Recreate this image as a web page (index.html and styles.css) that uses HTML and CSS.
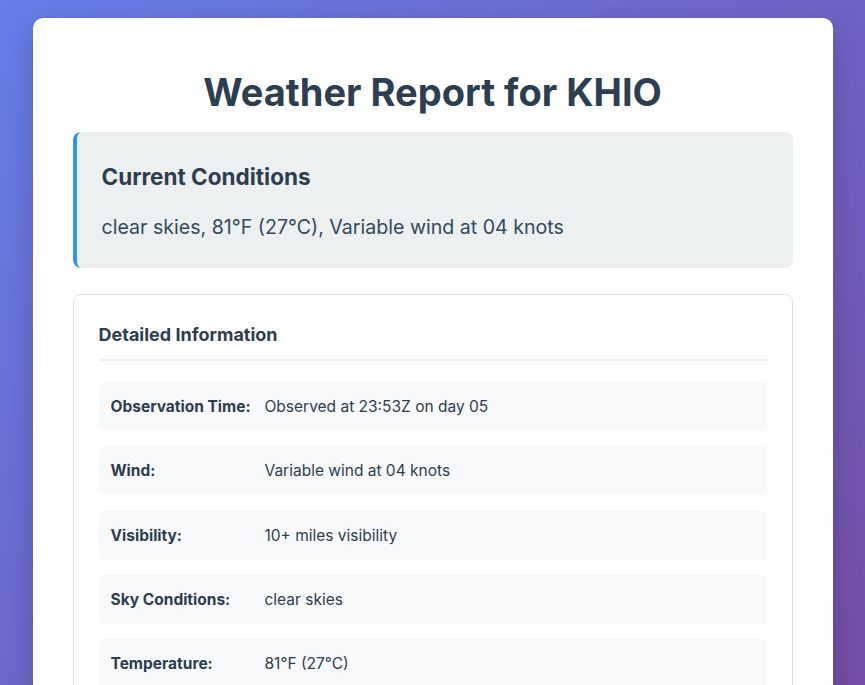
FILE: index.html
```html
<!DOCTYPE html>
<html lang="en">
<head>
<meta charset="utf-8">
<title>Weather Report for KHIO</title>
<link rel="stylesheet" href="styles.css">
</head>
<body>
<div class="container">
  <h1 class="title">Weather Report for KHIO</h1>
  <div class="current">
    <h2 class="current-title">Current Conditions</h2>
    <p class="current-text">clear skies, 81°F (27°C), Variable wind at 04 knots</p>
  </div>
  <div class="details">
    <h3 class="details-title">Detailed Information</h3>
    <div class="row"><span class="label">Observation Time:</span><span class="value">Observed at 23:53Z on day 05</span></div>
    <div class="row"><span class="label">Wind:</span><span class="value">Variable wind at 04 knots</span></div>
    <div class="row"><span class="label">Visibility:</span><span class="value">10+ miles visibility</span></div>
    <div class="row"><span class="label">Sky Conditions:</span><span class="value">clear skies</span></div>
    <div class="row"><span class="label">Temperature:</span><span class="value">81°F (27°C)</span></div>
  </div>
</div>
</body>
</html>
```
FILE: styles.css
```css
html, body {
  margin: 0;
  padding: 0;
}
body {
  font-family: Inter, "Noto Sans", sans-serif;
  background: linear-gradient(135deg, #667eea 0%, #764ba2 100%);
  min-height: 100vh;
  padding: 18px 0 20px;
  box-sizing: border-box;
  color: #2c3e50;
}
.container {
  max-width: 800px;
  margin: 0 auto;
  background: #ffffff;
  border-radius: 10px;
  padding: 40px;
  box-sizing: border-box;
  box-shadow: 0 10px 30px rgba(0, 0, 0, 0.2);
}
.title {
  margin: 11px 0 17px;
  text-align: center;
  font-size: 38px;
  font-weight: 700;
  line-height: 46px;
  color: #2c3e50;
}
.current {
  background: #ecf0f1;
  border-left: 4px solid #3498db;
  border-radius: 8px;
  padding: 25px;
  margin-bottom: 26px;
}
.current-title {
  margin: 0 0 15px;
  font-size: 22.5px;
  font-weight: 700;
  line-height: 40px;
  color: #2c3e50;
}
.current-text {
  margin: 0;
  font-size: 19.6px;
  line-height: 31px;
  color: #34495e;
}
.details {
  border: 1px solid #e0e0e0;
  border-radius: 8px;
  padding: 25px;
}
.details-title {
  margin: 0 0 21px;
  padding-bottom: 10px;
  border-bottom: 2px solid #ecf0f1;
  font-size: 18px;
  font-weight: 700;
  line-height: 29px;
  color: #2c3e50;
}
.row {
  display: flex;
  align-items: center;
  background: #f8f9fa;
  border-radius: 6px;
  padding: 15px 12px;
  margin-bottom: 15.25px;
  font-size: 15.5px;
  line-height: 19px;
}
.label {
  flex: 0 0 154px;
  font-weight: 700;
  color: #2c3e50;
}
.value {
  color: #2c3e50;
}
```
